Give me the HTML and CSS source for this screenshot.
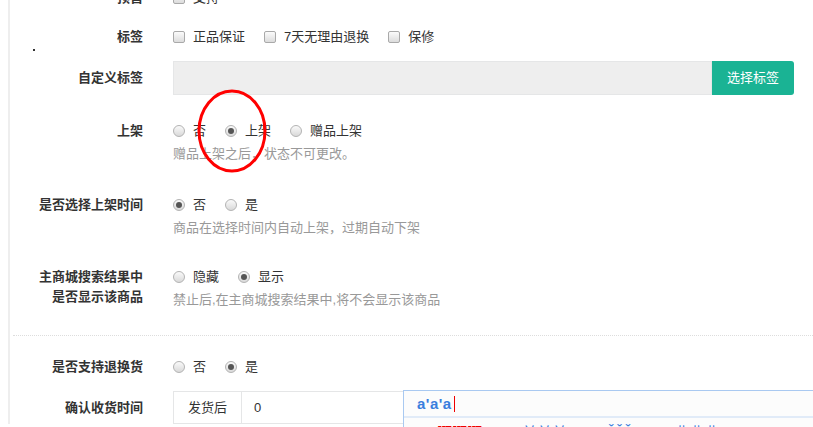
FILE: index.html
```html
<!DOCTYPE html>
<html lang="zh-CN">
<head>
    <meta charset="UTF-8">
    <meta name="viewport" content="width=device-width, initial-scale=1.0">
    <title>商品设置</title>
    <link rel="stylesheet" href="styles.css">
</head>
<body>
    <div class="form">
        <div class="row row-top">
            <label class="label">预售</label>
            <div class="controls">
                <span class="opt"><i class="check"></i>支持</span>
            </div>
        </div>

        <div class="row row-tags">
            <label class="label">标签</label>
            <div class="controls">
                <span class="opt"><i class="check"></i>正品保证</span>
                <span class="opt"><i class="check"></i>7天无理由退换</span>
                <span class="opt"><i class="check"></i>保修</span>
            </div>
        </div>

        <div class="row row-input row-custom">
            <label class="label">自定义标签</label>
            <div class="controls">
                <div class="input-group">
                    <input type="text" class="input input-gray" readonly>
                    <button type="button" class="btn">选择标签</button>
                </div>
            </div>
        </div>

        <div class="row row-shelf">
            <label class="label">上架</label>
            <div class="controls">
                <div class="line">
                    <span class="opt"><i class="radio"></i>否</span>
                    <span class="opt"><i class="radio on"></i>上架</span>
                    <span class="opt"><i class="radio"></i>赠品上架</span>
                </div>
                <p class="help">赠品上架之后，状态不可更改。</p>
            </div>
        </div>

        <div class="row row-time">
            <label class="label">是否选择上架时间</label>
            <div class="controls">
                <div class="line">
                    <span class="opt"><i class="radio on"></i>否</span>
                    <span class="opt"><i class="radio"></i>是</span>
                </div>
                <p class="help">商品在选择时间内自动上架，过期自动下架</p>
            </div>
        </div>

        <div class="row row-search">
            <label class="label">主商城搜索结果中<br>是否显示该商品</label>
            <div class="controls">
                <div class="line">
                    <span class="opt"><i class="radio"></i>隐藏</span>
                    <span class="opt"><i class="radio on"></i>显示</span>
                </div>
                <p class="help">禁止后,在主商城搜索结果中,将不会显示该商品</p>
            </div>
        </div>

        <hr class="divider">

        <div class="row row-return">
            <label class="label">是否支持退换货</label>
            <div class="controls">
                <span class="opt"><i class="radio"></i>否</span>
                <span class="opt"><i class="radio on"></i>是</span>
            </div>
        </div>

        <div class="row row-input">
            <label class="label">确认收货时间</label>
            <div class="controls">
                <div class="input-group input-group-sm">
                    <span class="addon">发货后</span>
                    <input type="text" class="input" value="0">
                </div>
            </div>
        </div>

        <!-- 标注用的红圈 -->
        <svg class="mark" width="72" height="86" viewBox="0 0 72 86">
            <ellipse cx="36" cy="43" rx="33" ry="40" fill="none" stroke="#f00" stroke-width="3"/>
        </svg>

        <!-- 输入法候选框 -->
        <div class="ime">
            <div class="ime-input">a'a'a<span class="caret"></span></div>
            <div class="ime-list">
                <span class="red">啊啊啊</span>
                <span>并并并</span>
                <span>ǎǎǎ</span>
                <span>哎哎哎</span>
                <span>·</span>
            </div>
        </div>
    </div>
</body>
</html>
```

FILE: styles.css
```css
* {
    margin:0;
    padding:0;
    box-sizing:border-box;
}

html, body {
    height:100%;
    overflow:hidden;
    background:#fff;
}

body {
    font-family:"Liberation Sans", "Noto Sans CJK SC", sans-serif;
    font-size:13px;
    color:#333;
}

.form {
    position:relative;
    min-height:100%;
    margin-left:8px;
    margin-top:-12px;
    padding-right:19px;
    border-left:2px solid #eee;
}

/* 左侧的小黑点 */
.form::before {
    content:'';
    position:absolute;
    top:61px;
    left:23px;
    width:2px;
    height:2px;
    background:#333;
}

.row {
    display:flex;
    align-items:flex-start;
    line-height:20px;
}

.row-input {
    align-items:center;
}

.label {
    flex:none;
    width:133px;
    margin-right:30px;
    text-align:right;
    font-weight:bold;
    color:#333;
}

.controls {
    flex:1;
    display:flex;
    flex-wrap:wrap;
    align-items:center;
}

.line {
    display:flex;
    align-items:center;
    width:100%;
}

.opt {
    display:inline-flex;
    align-items:center;
    gap:8px;
    margin-right:19px;
}

.check {
    display:inline-block;
    width:12px;
    height:12px;
    border:1px solid #a9a9a9;
    border-radius:2px;
    background:linear-gradient(#fbfbfb, #dcdcdc);
}

.radio {
    position:relative;
    display:inline-block;
    width:12px;
    height:12px;
    border:1px solid #b3b3b3;
    border-radius:50%;
    background:linear-gradient(#fafafa, #d9d9d9);
}

.radio.on::after {
    content:'';
    position:absolute;
    top:2px;
    left:2px;
    width:6px;
    height:6px;
    border-radius:50%;
    background:#555;
}

.help {
    width:100%;
    margin-top:3px;
    color:#999;
}

.row-top { margin-bottom:19px; }
.row-tags { margin-bottom:14px; }
.row-custom { margin-bottom:26px; }
.row-shelf { margin-bottom:31px; }
.row-time { margin-bottom:29px; }
.row-search { margin-bottom:25px; }
.row-return { margin-bottom:14px; }

.divider {
    margin:0 -19px 21px 3px;
    border:none;
    border-top:1px dotted #ddd;
}

.input-group {
    display:flex;
    width:100%;
    height:34px;
}

.input-group-sm {
    height:33px;
}

.input {
    flex:1;
    height:100%;
    padding:0 12px;
    border:1px solid #e5e6e7;
    font:inherit;
    color:#333;
    outline:none;
}

.input-gray {
    background:#eee;
}

.btn {
    flex:none;
    width:82px;
    height:100%;
    border:none;
    border-radius:0 3px 3px 0;
    background:#1ab394;
    color:#fff;
    font:inherit;
}

.addon {
    flex:none;
    display:flex;
    align-items:center;
    justify-content:center;
    width:68px;
    border:1px solid #e5e6e7;
    border-right:none;
    background:#fff;
}

.mark {
    position:absolute;
    top:100px;
    left:186px;
}

.ime {
    position:absolute;
    top:402px;
    left:393px;
    width:440px;
    height:60px;
    border:1px solid #a9c9f1;
    border-right:none;
    background:#fcfcfc;
}

.ime-input {
    display:flex;
    align-items:center;
    height:27px;
    padding-left:13px;
    border-bottom:2px solid #e1ebf8;
    font-family:"Liberation Sans", sans-serif;
    font-size:15px;
    font-weight:bold;
    color:#3a7ede;
    letter-spacing:0.5px;
}

.caret {
    display:inline-block;
    width:1px;
    height:16px;
    margin-left:2px;
    background:#e00;
}

.ime-list {
    display:flex;
    gap:40px;
    padding:3px 0 0 33px;
    font-size:15px;
    color:#3a7ede;
}

.ime-list .red {
    color:#e00;
}
```
